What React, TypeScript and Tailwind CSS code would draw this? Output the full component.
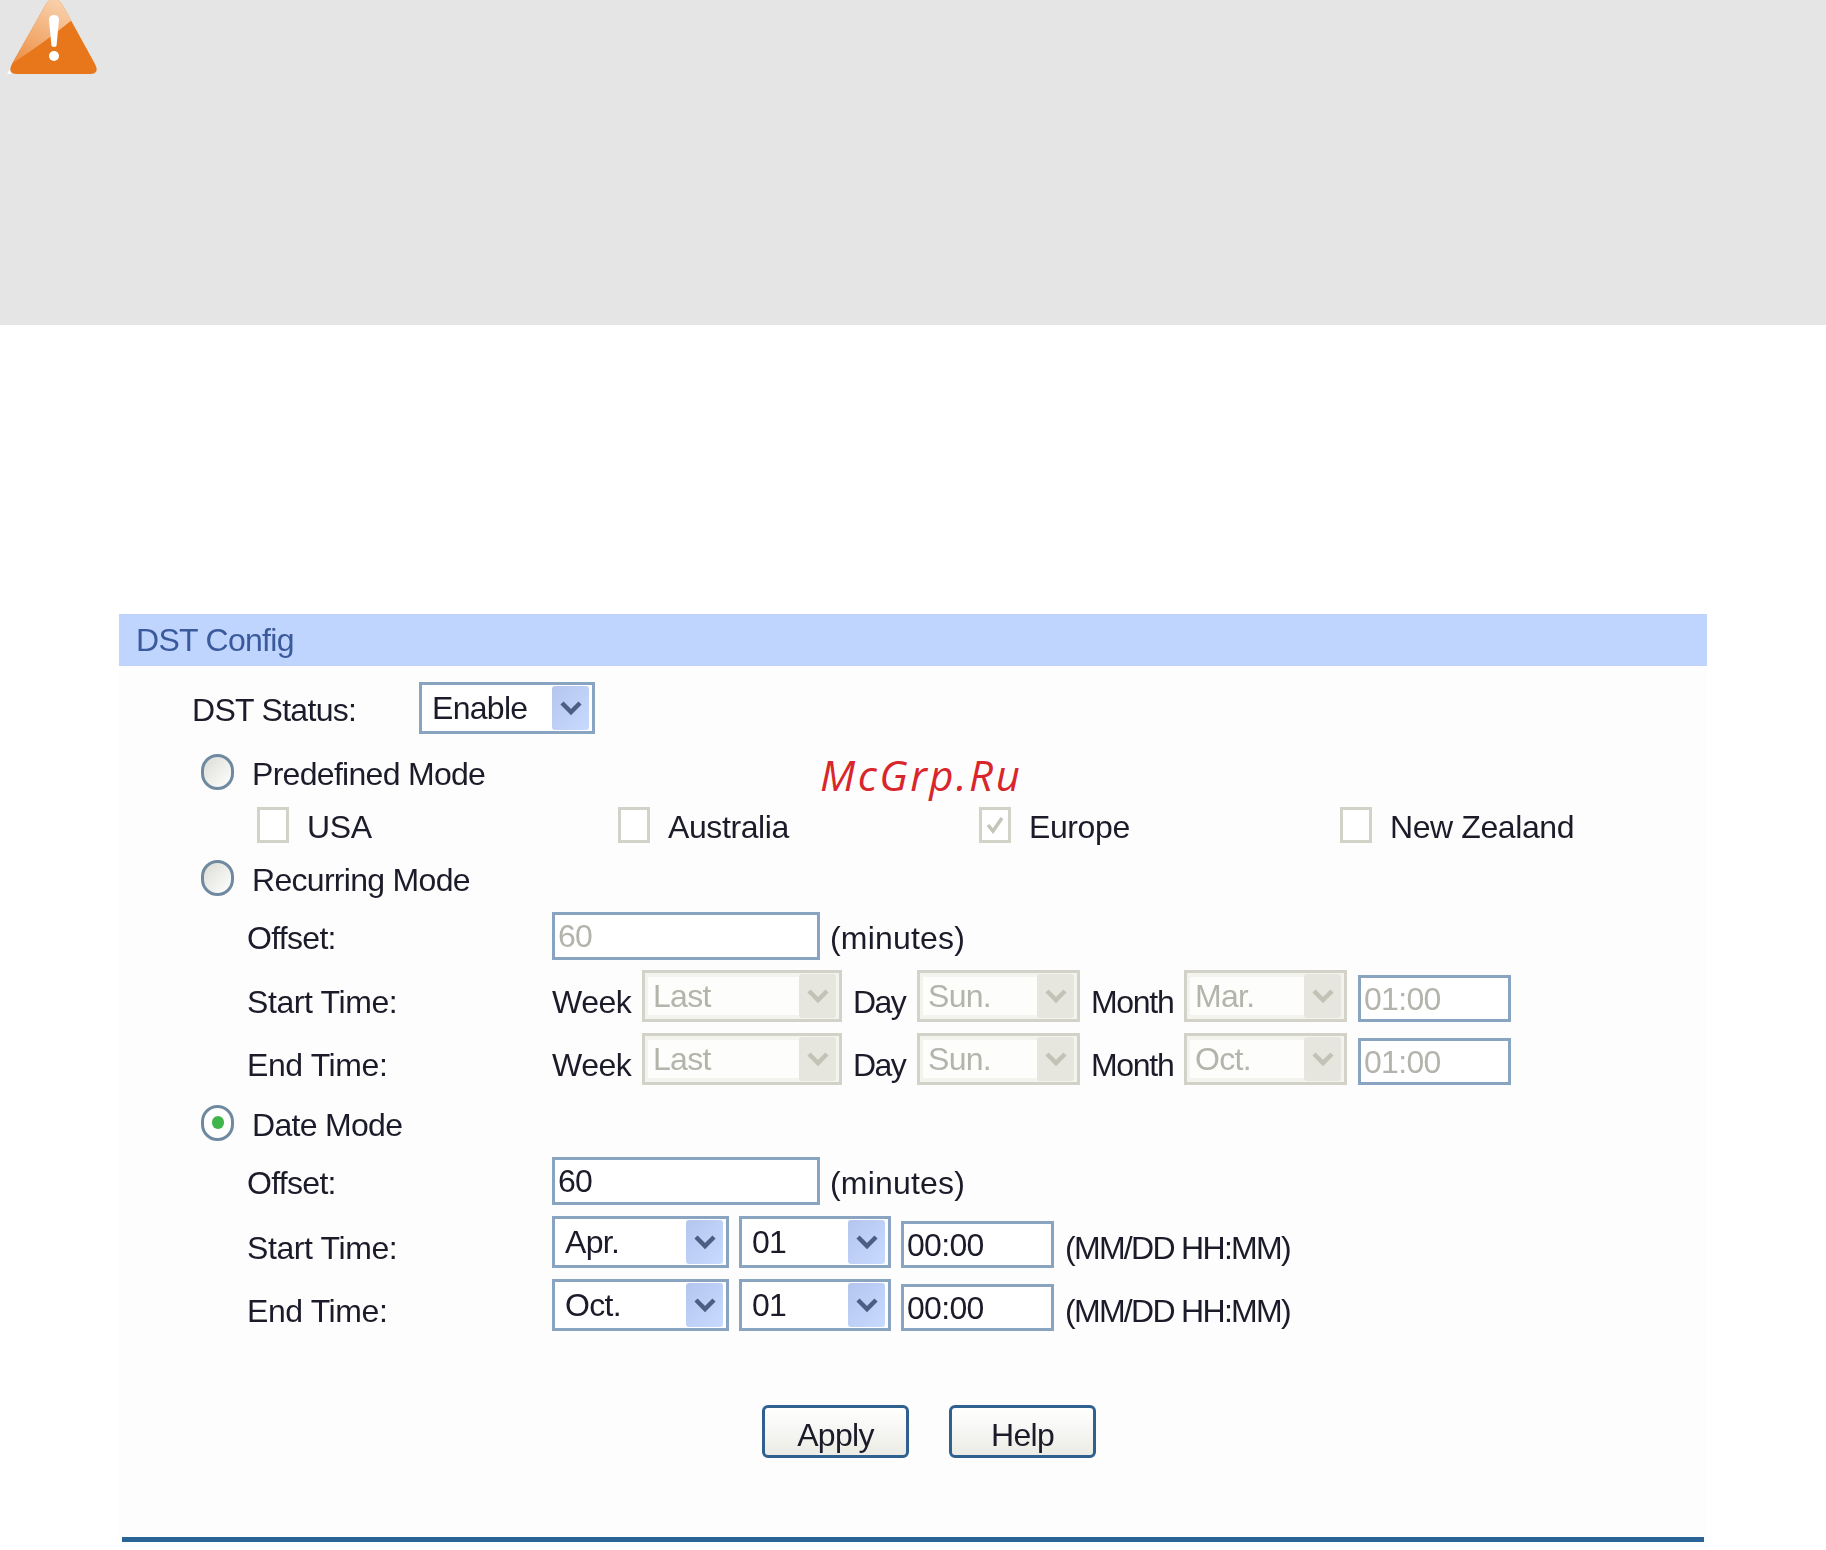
import React from 'react';

const Chevron: React.FC<{ color: string }> = ({ color }) => (
    <svg viewBox="0 0 22 16" className="w-[22px] h-[16px]" aria-hidden="true">
        <path d="M2 3 11 12 20 3" fill="none" stroke={color} strokeWidth="4.5" />
    </svg>
);

const Select: React.FC<{ value: string; width: string; disabled?: boolean }> = ({ value, width, disabled }) => (
    <div
        className={`${width} h-[52px] shrink-0 flex items-center border-[3px] pl-[3px] pr-[3px] ${
            disabled ? 'border-[#d2d2c8] bg-[#f4f4ee] text-[#b4b4ac]' : 'border-[#89a4c0] bg-white text-[#1b1b2a]'
        }`}
    >
        <span className={`flex-1 h-[38px] flex items-center ${disabled ? 'pl-[5px] bg-[#fdfdfb]' : 'pl-[7px] bg-white'}`}>{value}</span>
        <span
            className={`w-[37px] h-[44px] rounded-[3px] flex items-center justify-center ${
                disabled ? 'bg-[#e6e6de]' : 'bg-gradient-to-br from-[#b4c6ee] to-[#c8daff]'
            }`}
        >
            <Chevron color={disabled ? '#c2c2b6' : '#4c5f82'} />
        </span>
    </div>
);

const Input: React.FC<{ value: string; width: string; height?: string; disabled?: boolean }> = ({
    value,
    width,
    height = 'h-[47px]',
    disabled,
}) => (
    <div
        className={`${width} ${height} shrink-0 flex items-center border-[3px] border-[#89a4c0] bg-white pl-[3px] ${
            disabled ? 'text-[#b4b4ac]' : 'text-[#1b1b2a]'
        }`}
    >
        {value}
    </div>
);

const Radio: React.FC<{ label: string; checked?: boolean }> = ({ label, checked }) => (
    <div className="h-[40px] pl-[82px] flex items-center">
        <span
            className={`w-[33px] h-[36px] -mt-[5px] rounded-full border-[3px] border-[#6f8aa0] flex items-center justify-center ${
                checked ? 'bg-white' : 'bg-gradient-to-br from-[#dcdcd6] to-white'
            }`}
        >
            {checked && <span className="w-[12px] h-[13px] rounded-full bg-[#3fb54a]" />}
        </span>
        <span className="ml-[18px]">{label}</span>
    </div>
);

const Check: React.FC<{ label: string; checked?: boolean }> = ({ label, checked }) => (
    <div className="w-[361px] flex items-center">
        <span className="w-[32px] h-[36px] -mt-[4px] border-[3px] border-[#d2d2c8] bg-white flex items-center justify-center">
            {checked && (
                <svg viewBox="0 0 20 20" className="w-[20px] h-[22px]" aria-hidden="true">
                    <path d="M3 10 8 16 17 3" fill="none" stroke="#c4c4b8" strokeWidth="3.5" />
                </svg>
            )}
        </span>
        <span className="ml-[18px] tracking-[-0.4px]">{label}</span>
    </div>
);

const Row: React.FC<{ label: string; className: string; labelClass: string; children: React.ReactNode }> = ({
    label,
    className,
    labelClass,
    children,
}) => (
    <div className={`flex items-center pl-[128px] ${className}`}>
        <span className={`w-[305px] shrink-0 ${labelClass}`}>{label}</span>
        {children}
    </div>
);

const Button: React.FC<{ label: string }> = ({ label }) => (
    <button
        type="button"
        className="w-[147px] h-[53px] rounded-[6px] border-[3px] border-[#2f6190] bg-gradient-to-b from-white to-[#ecece6] text-[#1b1b2a] pt-[7px]"
    >
        {label}
    </button>
);

const WarningIcon = () => (
    <svg viewBox="0 0 100 76" className="absolute left-0 top-0 w-[100px] h-[76px]" aria-hidden="true">
        <defs>
            <clipPath id="tri">
                <path d="M46 4 Q54 -6 62 4 L95 64 Q100 74 90 74 L17 74 Q7 74 12 64 Z" />
            </clipPath>
            <linearGradient id="shine" x1="0.7" y1="0" x2="0.3" y2="1">
                <stop offset="0" stopColor="#f9d3b0" />
                <stop offset="1" stopColor="#ec8a3c" />
            </linearGradient>
        </defs>
        <path d="M7 74 10 69 11 74Z" fill="#ffffff" />
        <g clipPath="url(#tri)">
            <rect x="0" y="-4" width="100" height="80" fill="#e8761a" />
            <path d="M0 72 13 63 Q45 42 72 20 L60 -6 L40 -6 Z" fill="url(#shine)" />
        </g>
        <path d="M49 20 Q49 15 54 15 Q59 15 59 20 L56.5 46 Q54 48 51.5 46 Z" fill="#ffffff" />
        <circle cx="54" cy="56" r="5" fill="#ffffff" />
    </svg>
);

const DisabledTimes: React.FC<{ label: string; month: string; className: string }> = ({ label, month, className }) => (
    <Row label={label} labelClass="pt-[11px] tracking-[-0.4px]" className={className}>
        <span className="w-[90px] pt-[11px] tracking-[-0.5px]">Week</span>
        <Select value="Last" width="w-[200px]" disabled />
        <span className="w-[64px] ml-[11px] pt-[11px] tracking-[-1.6px]">Day</span>
        <Select value="Sun." width="w-[163px]" disabled />
        <span className="w-[93px] ml-[11px] pt-[11px] tracking-[-1.3px]">Month</span>
        <Select value={month} width="w-[163px]" disabled />
        <div className="ml-[11px] mt-[5px]">
            <Input value="01:00" width="w-[153px]" disabled />
        </div>
    </Row>
);

const DateTimes: React.FC<{ label: string; month: string; className: string }> = ({ label, month, className }) => (
    <Row label={label} labelClass="pt-[11px] tracking-[-0.4px]" className={className}>
        <Select value={month} width="w-[177px]" />
        <div className="ml-[10px]">
            <Select value="01" width="w-[152px]" />
        </div>
        <div className="ml-[10px] mt-[5px]">
            <Input value="00:00" width="w-[153px]" />
        </div>
        <span className="ml-[11px] pt-[11px] tracking-[-1.7px]">(MM/DD HH:MM)</span>
    </Row>
);

const App: React.FC = () => (
    <div
        className="relative w-[1826px] h-[1550px] bg-white text-[#1b1b2a] text-[32px] leading-none tracking-[-0.7px] overflow-hidden"
        style={{ fontFamily: '"Liberation Sans", Arial, sans-serif' }}
    >
        <div className="relative h-[325px] bg-[#e5e5e5]">
            <WarningIcon />
        </div>

        <main className="ml-[119px] w-[1588px] mt-[289px] h-[934px] bg-[#fdfdfd] blur-[0.7px]">
            <div className="h-[52px] bg-[#bfd5fd] pl-[17px] flex items-center text-[#3a5a9c]">DST Config</div>

            <div className="mt-[16px] h-[52px] pl-[73px] flex items-center">
                <span className="w-[227px] pt-[4px]">DST Status:</span>
                <Select value="Enable" width="w-[176px]" />
            </div>

            <div className="mt-[20px]">
                <Radio label="Predefined Mode" />
            </div>
            <div className="mt-[13px] h-[40px] pl-[138px] flex items-center">
                <Check label="USA" />
                <Check label="Australia" />
                <Check label="Europe" checked />
                <Check label="New Zealand" />
            </div>
            <div className="mt-[13px]">
                <Radio label="Recurring Mode" />
            </div>

            <Row label="Offset:" labelClass="pt-[4px]" className="mt-[12px] h-[48px]">
                <Input value="60" width="w-[268px]" height="h-[48px]" disabled />
                <span className="ml-[10px] pt-[4px] tracking-[0.2px]">(minutes)</span>
            </Row>
            <DisabledTimes label="Start Time:" month="Mar." className="mt-[10px] h-[52px]" />
            <DisabledTimes label="End Time:" month="Oct." className="mt-[11px] h-[52px]" />

            <div className="mt-[20px]">
                <Radio label="Date Mode" checked />
            </div>
            <Row label="Offset:" labelClass="pt-[4px]" className="mt-[12px] h-[48px]">
                <Input value="60" width="w-[268px]" height="h-[48px]" />
                <span className="ml-[10px] pt-[4px] tracking-[0.2px]">(minutes)</span>
            </Row>
            <DateTimes label="Start Time:" month="Apr." className="mt-[11px] h-[52px]" />
            <DateTimes label="End Time:" month="Oct." className="mt-[11px] h-[52px]" />

            <div className="mt-[74px] pl-[643px] flex gap-[40px]">
                <Button label="Apply" />
                <Button label="Help" />
            </div>
        </main>

        <div className="ml-[122px] mt-[-11px] w-[1582px] h-[5px] bg-[#2a6496] relative" />

        <span
            className="absolute left-[820px] top-[754px] text-[#d8262c] text-[42px] italic tracking-[2.5px]"
            style={{ fontFamily: '"Open Sans", sans-serif' }}
        >
            McGrp.Ru
        </span>
    </div>
);

export default App;
